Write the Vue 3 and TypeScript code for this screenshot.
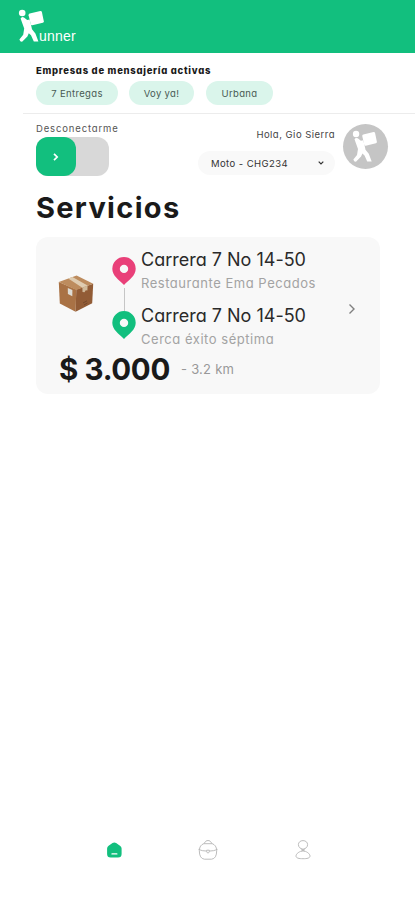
<script setup lang="ts">
interface Stop {
  address: string
  place: string
  tone: 'pickup' | 'dropoff'
}

const companies: string[] = ['7 Entregas', 'Voy ya!', 'Urbana']

const stops: Stop[] = [
  { address: 'Carrera 7 No 14-50', place: 'Restaurante Ema Pecados', tone: 'pickup' },
  { address: 'Carrera 7 No 14-50', place: 'Cerca éxito séptima', tone: 'dropoff' },
]
</script>

<template>
  <div class="screen">
    <header class="topbar">
      <svg class="runner" viewBox="0 0 28 34">
        <circle cx="4.2" cy="4" r="3.3" />
        <path d="M10.6 6.2Q10.5 5 11.7 4.6L22.3 2Q23.6 1.8 23.9 3L25.8 12.2Q25.9 13.3 24.8 13.7L14.3 16.2Q13 16.4 12.7 15.2Z" />
        <path d="M2.6 9.6Q3.6 7.4 6 8.4L9.2 11 11.6 10.6 13 15.8 14 20.3 17.4 24.5 20.4 32.6H15.8L13 26.3 10.8 24.2 9.4 27.4 4.4 32.6Q2.2 33.2 1.4 30.4L5.2 25.8 6.2 19.5Z" />
      </svg>
      <span class="brand">unner</span>
    </header>

    <section class="companies">
      <h2>Empresas de mensajería activas</h2>
      <div class="chips">
        <span v-for="(company, i) in companies" :key="company" class="chip" :class="'chip-' + i">{{ company }}</span>
      </div>
    </section>

    <section class="account">
      <div class="status">
        <span class="status-label">Desconectarme</span>
        <div class="toggle">
          <div class="thumb">
            <svg viewBox="0 0 8 10"><path d="M2 1.8 5.2 5 2 8.2" /></svg>
          </div>
        </div>
      </div>
      <div class="user">
        <span class="hello">Hola, Gio Sierra</span>
        <div class="vehicle">
          <span>Moto - CHG234</span>
          <svg viewBox="0 0 8 6"><path d="M1.7 1.7 4 4 6.3 1.7" /></svg>
        </div>
      </div>
      <div class="avatar">
        <svg class="runner" viewBox="0 0 28 34">
          <circle cx="4.2" cy="4" r="3.3" />
          <path d="M10.6 6.2Q10.5 5 11.7 4.6L22.3 2Q23.6 1.8 23.9 3L25.8 12.2Q25.9 13.3 24.8 13.7L14.3 16.2Q13 16.4 12.7 15.2Z" />
          <path d="M2.6 9.6Q3.6 7.4 6 8.4L9.2 11 11.6 10.6 13 15.8 14 20.3 17.4 24.5 20.4 32.6H15.8L13 26.3 10.8 24.2 9.4 27.4 4.4 32.6Q2.2 33.2 1.4 30.4L5.2 25.8 6.2 19.5Z" />
        </svg>
      </div>
    </section>

    <main>
      <h1>Servicios</h1>
      <article class="card">
        <div class="trip">
          <svg class="package" viewBox="0 0 36 38">
            <path d="M.8 8 18.3 15.5 17.6 37.8 1.8 29.5Z" fill="#a97245" />
            <path d="M18.3 15.5 35.2 9.8 34.2 29.3 17.6 37.8Z" fill="#925c36" />
            <path d="M.8 8 18.6 1.4 35.2 9.8 18.3 16Z" fill="#bd8c5e" />
            <path d="M10.2 4.6 14.4 3 29.6 11.6 24.4 13.7Z" fill="#dfccb1" />
            <path d="M24.4 13.7 29.6 11.6 29.4 16.5 27.8 16.3 26.5 18.2 24.5 18Z" fill="#d0b999" />
            <path d="M9.8 14 14.4 16 14.3 22.2 9.9 20Z" fill="#dedcd5" />
            <path d="M25 29 29 26.8M26 31 29.5 29" stroke="#6b432a" stroke-width=".8" />
          </svg>
          <div class="route">
            <svg class="pin pickup" viewBox="0 0 24 28">
              <path fill-rule="evenodd" d="M12 0A11.7 11.7 0 0 0 .3 11.7C.3 19 7 22.5 12 28 17 22.5 23.7 19 23.7 11.7A11.7 11.7 0 0 0 12 0ZM12 7.7A4.2 4.2 0 1 1 12 16.1 4.2 4.2 0 0 1 12 7.7Z" />
            </svg>
            <span class="link"></span>
            <svg class="pin dropoff" viewBox="0 0 24 28">
              <path fill-rule="evenodd" d="M12 0A11.7 11.7 0 0 0 .3 11.7C.3 19 7 22.5 12 28 17 22.5 23.7 19 23.7 11.7A11.7 11.7 0 0 0 12 0ZM12 7.7A4.2 4.2 0 1 1 12 16.1 4.2 4.2 0 0 1 12 7.7Z" />
            </svg>
          </div>
          <div class="stops">
            <div v-for="stop in stops" :key="stop.tone" class="stop">
              <span class="address">{{ stop.address }}</span>
              <span class="place">{{ stop.place }}</span>
            </div>
          </div>
          <svg class="chevron" viewBox="0 0 8 12"><path d="M1.5 1.5 6 6 1.5 10.5" /></svg>
        </div>
        <div class="fare">
          <strong>$ 3.000</strong>
          <span>- 3.2 km</span>
        </div>
      </article>
    </main>

    <nav class="tabs">
      <svg viewBox="0 0 22 22">
        <path class="solid" d="M4.1 9.6Q4.1 7.8 5.6 6.7L9.5 4Q11.3 2.9 13.1 4L17 6.7Q18.6 7.8 18.6 9.6V15Q18.6 18.6 15 18.6H7.7Q4.1 18.6 4.1 15Z" />
        <path d="M9 14.9H13.8" stroke="#fff" stroke-width="1.4" stroke-linecap="round" />
      </svg>
      <svg viewBox="0 0 22 22" class="outline briefcase">
        <path d="M7 4.6 8.2 2.9Q8.8 2 10 1.6H12Q13.2 2 13.8 2.9L15 4.6M6.8 4.7H15.2Q19.4 6 19.7 11.5 19.7 19.7 14.5 20.2H7.5Q2.3 19.7 2.3 11.5 2.6 6 6.8 4.7ZM1.5 10.4Q5 12 9.7 12.1M12.3 12.1Q17 12 20.5 10.4M9.7 11.2H12.3V12.6Q12 14 11 14 10 14 9.7 12.6Z" />
      </svg>
      <svg viewBox="0 0 22 22" class="outline">
        <path d="M11 1.6C13.8 1.6 15.6 3.4 15.6 5.6 15.6 8.2 13.4 10 11 10.2 8.6 10 6.4 8.2 6.4 5.6 6.4 3.4 8.2 1.6 11 1.6ZM9 9.7 12.8 12.3M13 9.7 9.2 12.3" />
        <path d="M11 12C7.5 12 4 14.8 4 17 4 19.2 7 19.7 11 19.7S18 19.2 18 17C18 14.8 14.5 12 11 12Z" />
      </svg>
    </nav>
  </div>
</template>

<style>
body {
  background: #fff;
}
</style>

<style scoped>
.screen {
  box-sizing: border-box;
  display: flex;
  flex-direction: column;
  height: 900px;
  overflow: hidden;
  background: #fff;
  color: #1a1a1a;
  font-family: Inter, 'Liberation Sans', sans-serif;
  font-feature-settings: 'cv11', 'calt' 0;
  white-space: nowrap;
}
svg {
  display: block;
  flex: none;
  fill: none;
}
.topbar {
  display: flex;
  height: 53px;
  box-sizing: border-box;
  padding: 9px 0 0 18px;
  background: #12bf7e;
}
.runner {
  width: 28px;
  height: 34px;
  fill: #fff;
}
.brand {
  margin: 19px 0 0 -7px;
  color: #fff;
  font: 14px/16px 'Liberation Sans', sans-serif;
  letter-spacing: 0.2px;
}
.companies {
  box-sizing: border-box;
  height: 61px;
  margin-left: 23px;
  padding: 10px 0 0 13px;
  border-bottom: 1px solid #ececec;
}
h1,
h2 {
  margin: 0;
}
h2 {
  font-size: 9.5px;
  font-weight: 800;
  line-height: 15px;
  letter-spacing: 0.72px;
}
.chips {
  display: flex;
  margin-top: 3px;
}
.chip {
  height: 24px;
  border-radius: 12px;
  background: #daf5eb;
  color: #485a53;
  font-size: 9.5px;
  line-height: 25px;
  letter-spacing: 0.35px;
  text-align: center;
}
.chip-0 {
  width: 82px;
}
.chip-1 {
  width: 65px;
  margin: 0 12px 0 11px;
}
.chip-2 {
  width: 67px;
}
.account {
  display: flex;
  height: 73px;
  padding-left: 36px;
}
.status {
  width: 162px;
  padding-top: 7px;
}
.status-label {
  display: block;
  color: #555;
  font-size: 9.5px;
  line-height: 15px;
  letter-spacing: 0.85px;
}
.toggle {
  width: 73px;
  height: 39px;
  margin-top: 1px;
  border-radius: 12px;
  background: #d8d8d8;
}
.thumb {
  display: grid;
  width: 40px;
  height: 39px;
  border-radius: 12px;
  background: #12bf7e;
  place-items: center;
}
.thumb svg {
  width: 8px;
  height: 10px;
  stroke: #fff;
  stroke-width: 1.7;
}
.user {
  display: flex;
  flex-direction: column;
  width: 137px;
  padding-top: 14px;
}
.hello {
  align-self: flex-end;
  color: #444;
  font-size: 9.5px;
  line-height: 14px;
  letter-spacing: 0.48px;
}
.vehicle {
  display: flex;
  align-items: center;
  justify-content: space-between;
  height: 24px;
  margin-top: 9px;
  padding: 0 10px 0 13px;
  border-radius: 12px;
  background: #f9f9f9;
  color: #333;
  font-size: 9.5px;
  letter-spacing: 0.42px;
}
.vehicle svg {
  width: 8px;
  height: 6px;
  stroke: #333;
  stroke-width: 1.2;
}
.avatar {
  display: grid;
  width: 45px;
  height: 45px;
  margin: 10px 0 0 8px;
  border-radius: 50%;
  background: #c5c5c5;
  place-items: center;
}
.avatar .runner {
  width: 27px;
  height: 33px;
}
main {
  padding: 0 35px 0 36px;
}
h1 {
  height: 50px;
  font-size: 29px;
  font-weight: 700;
  line-height: 41px;
  letter-spacing: 1.3px;
}
.card {
  box-sizing: border-box;
  height: 157px;
  padding: 9px 24px 0 22px;
  border-radius: 12px;
  background: #f8f8f8;
}
.trip {
  display: flex;
  height: 107px;
}
.package {
  width: 36px;
  height: 38px;
  margin-top: 28px;
}
.route {
  display: flex;
  flex-direction: column;
  align-items: center;
  margin: 11px 5px 0 18px;
}
.pin {
  width: 24px;
  height: 28px;
}
.pin.pickup {
  fill: #e94079;
}
.pin.dropoff {
  fill: #12bf7e;
}
.link {
  width: 1px;
  height: 23px;
  margin: 3px 0 0;
  background: #c6c6c6;
}
.stops {
  flex: 1;
}
.stop {
  height: 56px;
}
.address,
.place {
  display: block;
}
.address {
  color: #2a2a2a;
  font-size: 18px;
  line-height: 27px;
}
.place {
  color: #a3a3a3;
  font-size: 13px;
  line-height: 20px;
  letter-spacing: 0.53px;
}
.chevron {
  width: 8px;
  height: 12px;
  margin-top: 57px;
  stroke: #808080;
  stroke-width: 1.4;
}
.fare {
  display: flex;
  align-items: center;
  height: 32px;
}
.fare strong {
  width: 122px;
  padding-left: 1px;
  font-size: 29.5px;
  font-weight: 700;
  letter-spacing: -0.35px;
}
.fare span {
  color: #999;
  font-size: 13px;
  letter-spacing: 0.25px;
}
.tabs {
  display: flex;
  justify-content: space-between;
  margin: auto 101px 39px 103px;
}
.tabs svg {
  width: 22px;
  height: 22px;
}
.tabs .briefcase {
  margin-right: 1px;
}
.solid {
  fill: #12bf7e;
}
.outline {
  stroke: #b5b5b5;
  stroke-width: 0.9;
}
</style>
